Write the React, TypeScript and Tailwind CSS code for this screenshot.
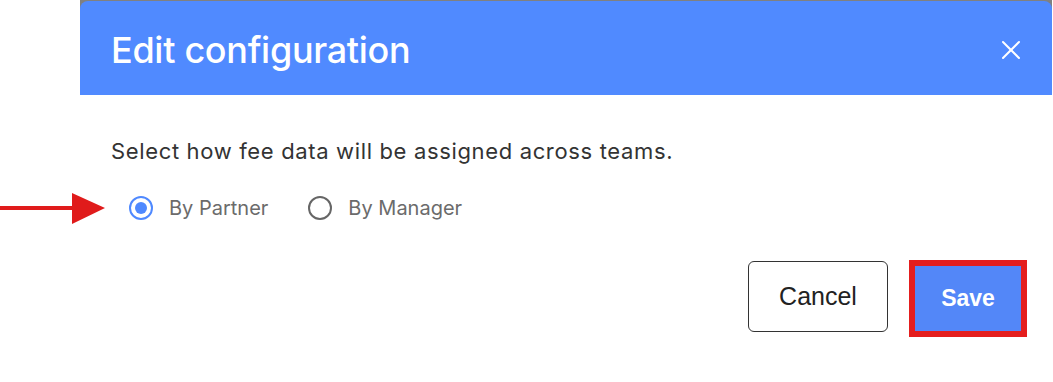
import { X } from "lucide-react";

function Radio({ label, checked }: { label: string; checked?: boolean }) {
	return (
		<label className="flex items-center gap-[16px]">
			<span
				className={`flex h-[24px] w-[24px] items-center justify-center rounded-full border-2 ${
					checked ? "border-[#4f89ff]" : "border-[#666666]"
				}`}
			>
				{checked && <span className="h-[12px] w-[12px] rounded-full bg-[#4f89ff]" />}
			</span>
			<span className="text-[20px] text-[#6b6b6b]">{label}</span>
		</label>
	);
}

export default function App() {
	return (
		<div className="relative h-[382px] w-[1053px] overflow-hidden bg-white font-['Inter',sans-serif]">
			<div className="ml-[80px] w-[972px]">
				<div className="bg-[#808080] pt-px">
					<div className="flex h-[94px] items-center justify-between rounded-t-lg bg-[#508aff] pl-[31px] pr-[25px] pt-[4px]">
						<h2 className="text-[36px] font-medium tracking-[-0.3px] text-white">Edit configuration</h2>
						<X className="h-[32px] w-[32px] text-white" strokeWidth={1.5} />
					</div>
				</div>

				<div className="px-[31px] pt-[42px]">
					<p className="text-[22px] leading-[28px] tracking-[0.65px] text-[#333333]">
						Select how fee data will be assigned across teams.
					</p>
					<div className="mt-[28px] flex items-center gap-[40px] pl-[18px]">
						<Radio label="By Partner" checked />
						<Radio label="By Manager" />
					</div>
				</div>

				<div className="mt-[33px] flex items-center justify-end gap-[21px] pr-[25px] font-['Liberation_Sans',Arial,sans-serif]">
					<button
						type="button"
						className="h-[71px] w-[140px] rounded-md border border-[#333333] bg-white text-[25px] text-[#222222]"
					>
						Cancel
					</button>
					<button
						type="button"
						className="mt-[4px] h-[77px] w-[118px] border-[6px] border-[#e41e1e] bg-[#5387f8] text-[23px] font-bold text-white"
					>
						Save
					</button>
				</div>
			</div>

			<svg className="absolute left-0 top-[192px]" width="108" height="34" viewBox="0 0 108 34">
				<rect x="0" y="14" width="76" height="4" fill="#e01b1b" />
				<polygon points="72,1 105,16 72,32" fill="#e01b1b" />
			</svg>
		</div>
	);
}
